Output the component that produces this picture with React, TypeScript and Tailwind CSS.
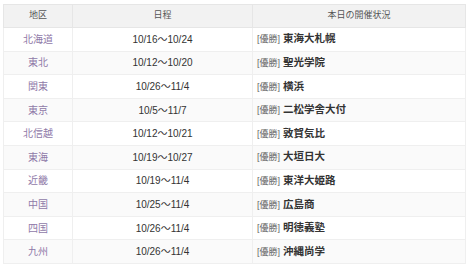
const rows = [
  { area: "北海道", date: "10/16～10/24", school: "東海大札幌" },
  { area: "東北", date: "10/12～10/20", school: "聖光学院" },
  { area: "関東", date: "10/26～11/4", school: "横浜" },
  { area: "東京", date: "10/5～11/7", school: "二松学舎大付" },
  { area: "北信越", date: "10/12～10/21", school: "敦賀気比" },
  { area: "東海", date: "10/19～10/27", school: "大垣日大" },
  { area: "近畿", date: "10/19～11/4", school: "東洋大姫路" },
  { area: "中国", date: "10/25～11/4", school: "広島商" },
  { area: "四国", date: "10/26～11/4", school: "明徳義塾" },
  { area: "九州", date: "10/26～11/4", school: "沖縄尚学" },
];

export default function App() {
  return (
    <div
      className="w-[474px] h-[270px] bg-white pl-[3px] pt-[4px]"
      style={{ fontFamily: '"Liberation Sans", "Noto Sans CJK JP", sans-serif' }}
    >
      <table className="w-[463px] border-collapse border border-[#e6e6e6] text-[10px]">
        <thead>
          <tr className="bg-[#f2f2f2] h-[23px] text-[9px] text-[#555]">
            <th className="w-[69px] border border-[#e6e6e6] font-normal">地区</th>
            <th className="w-[180px] border border-[#e6e6e6] font-normal">日程</th>
            <th className="border border-[#e6e6e6] font-normal">本日の開催状況</th>
          </tr>
        </thead>
        <tbody>
          {rows.map((r, i) => (
            <tr key={r.area} className={i % 2 === 1 ? "bg-[#fafafa] h-[23.6px]" : "bg-white h-[23.6px]"}>
              <td className="border border-[#efefef] text-center text-[#8f79a8]">{r.area}</td>
              <td className="border border-[#efefef] text-center text-[#333]">{r.date}</td>
              <td className="border border-[#efefef] pl-[4px] text-[#333]">
                <span className="text-[9px] text-[#666] mr-[3px]">[優勝]</span>
                <span className="text-[10.5px] font-bold">{r.school}</span>
              </td>
            </tr>
          ))}
        </tbody>
      </table>
    </div>
  );
}
